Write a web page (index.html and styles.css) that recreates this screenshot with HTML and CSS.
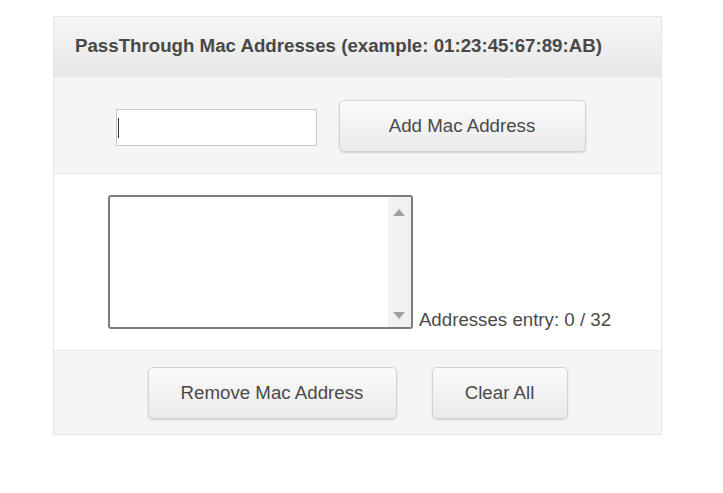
FILE: index.html
```html
<!DOCTYPE html>
<html>
<head>
<meta charset="utf-8">
<link rel="stylesheet" href="styles.css">
</head>
<body>
<div class="panel">
  <div class="panel-head">PassThrough Mac Addresses (example: 01:23:45:67:89:AB)</div>
  <div class="row row-add">
    <div class="text-input"><span class="caret"></span></div>
    <button class="btn btn-add">Add Mac Address</button>
  </div>
  <div class="row row-list">
    <div class="listbox">
      <div class="list-body"></div>
      <div class="scrollbar">
        <svg class="arrow" width="12" height="7" viewBox="0 0 12 7"><polygon points="0,7 12,7 6,0" fill="#a0a0a0"/></svg>
        <svg class="arrow" width="12" height="7" viewBox="0 0 12 7"><polygon points="0,0 12,0 6,7" fill="#a0a0a0"/></svg>
      </div>
    </div>
    <div class="count">Addresses entry: 0 / 32</div>
  </div>
  <div class="row row-actions">
    <button class="btn btn-remove">Remove Mac Address</button>
    <button class="btn btn-clear">Clear All</button>
  </div>
</div>
</body>
</html>
```

FILE: styles.css
```css
html, body {
  margin: 0;
  padding: 0;
  background: #ffffff;
}
body {
  font-family: "Liberation Sans", Arial, sans-serif;
  color: #444444;
  padding: 16px 0 0 53px;
}
.panel {
  width: 607px;
  border: 1px solid #e6e6e6;
  background: #f5f5f5;
}
.panel-head {
  height: 61px;
  box-sizing: border-box;
  padding: 18px 0 0 21px;
  font-size: 18.7px;
  font-weight: bold;
  color: #484848;
  letter-spacing: 0;
  background: linear-gradient(#f6f6f6, #e7e7e7);
  border-bottom: 1px solid #ececec;
}
.row {
  display: flex;
  justify-content: center;
  border-bottom: 1px solid #e6e6e6;
}
.row-add {
  height: 96px;
  align-items: center;
  gap: 22px;
  padding-right: 14px;
  box-sizing: border-box;
  background: #f5f5f5;
}
.text-input {
  width: 201px;
  height: 37px;
  box-sizing: border-box;
  background: #ffffff;
  border: 1px solid #c8c8c8;
  display: flex;
  align-items: center;
  padding-left: 1px;
  margin-top: 4px;
}
.caret {
  width: 1px;
  height: 20px;
  background: #333;
}
.btn {
  font-family: "Liberation Sans", Arial, sans-serif;
  font-size: 18.7px;
  color: #4a4a4a;
  height: 52px;
  border: 1px solid #d2d2d2;
  border-radius: 5px;
  background: linear-gradient(#fbfbfb, #eaeaea);
  box-shadow: 0 1px 2px rgba(0,0,0,0.15);
  padding: 0;
}
.btn-add { width: 247px; }
.btn-remove { width: 249px; }
.btn-clear { width: 136px; }
.row-list {
  height: 177px;
  box-sizing: border-box;
  background: #ffffff;
  padding-top: 21px;
  padding-left: 4px;
  align-items: flex-start;
  gap: 6px;
}
.listbox {
  width: 305px;
  height: 134px;
  box-sizing: border-box;
  border: 2px solid #7c7c7c;
  border-radius: 3px;
  display: flex;
  background: #ffffff;
  overflow: hidden;
}
.list-body {
  flex: 1;
}
.scrollbar {
  width: 23px;
  background: #f1f1f1;
  display: flex;
  flex-direction: column;
  justify-content: space-between;
  align-items: center;
  padding: 12px 0 8px;
}
.count {
  align-self: flex-end;
  font-size: 18.7px;
  color: #4a4a4a;
  margin-bottom: 20px;
  line-height: 20px;
}
.row-actions {
  height: 83px;
  border-bottom: none;
  align-items: center;
  gap: 35px;
  padding-top: 1px;
  box-sizing: border-box;
  background: #f5f5f5;
}
```
